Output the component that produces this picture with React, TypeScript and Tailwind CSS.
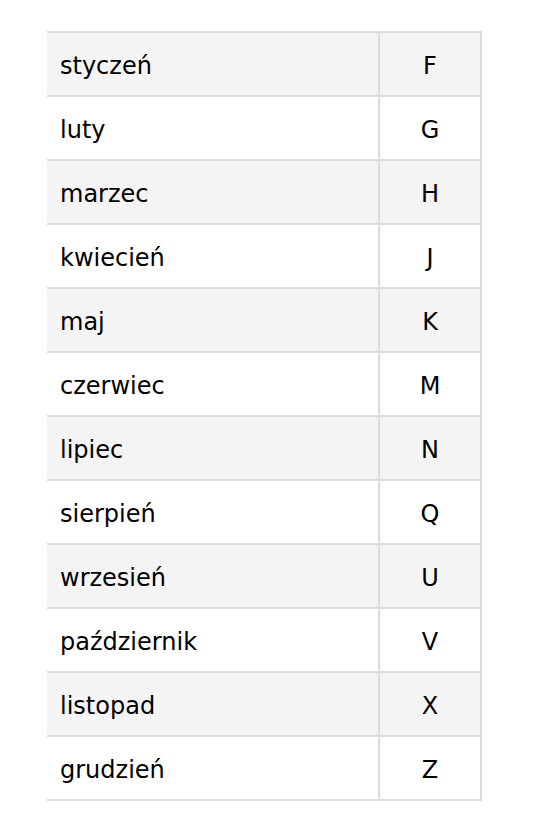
const months: [string, string][] = [
  ['styczeń', 'F'],
  ['luty', 'G'],
  ['marzec', 'H'],
  ['kwiecień', 'J'],
  ['maj', 'K'],
  ['czerwiec', 'M'],
  ['lipiec', 'N'],
  ['sierpień', 'Q'],
  ['wrzesień', 'U'],
  ['październik', 'V'],
  ['listopad', 'X'],
  ['grudzień', 'Z'],
];

export default function App() {
  return (
    <div className="min-h-[833px] bg-white pt-[31px] pl-[47px]" style={{ fontFamily: '"DejaVu Sans", Verdana, sans-serif' }}>
      <div className="w-[435px] border-t-2 border-r-2 border-[#dcdcdc]">
        {months.map(([name, code], i) => (
          <div
            key={name}
            className={`flex h-[64px] border-b-2 border-[#dcdcdc] text-[24px] text-black ${i % 2 === 0 ? 'bg-[#f4f4f4]' : 'bg-white'}`}
          >
            <div className="flex w-[333px] items-center border-r-2 border-[#dcdcdc] pl-[13px] pt-[3px]">{name}</div>
            <div className="flex flex-1 items-center justify-center pt-[3px]">{code}</div>
          </div>
        ))}
      </div>
    </div>
  );
}
